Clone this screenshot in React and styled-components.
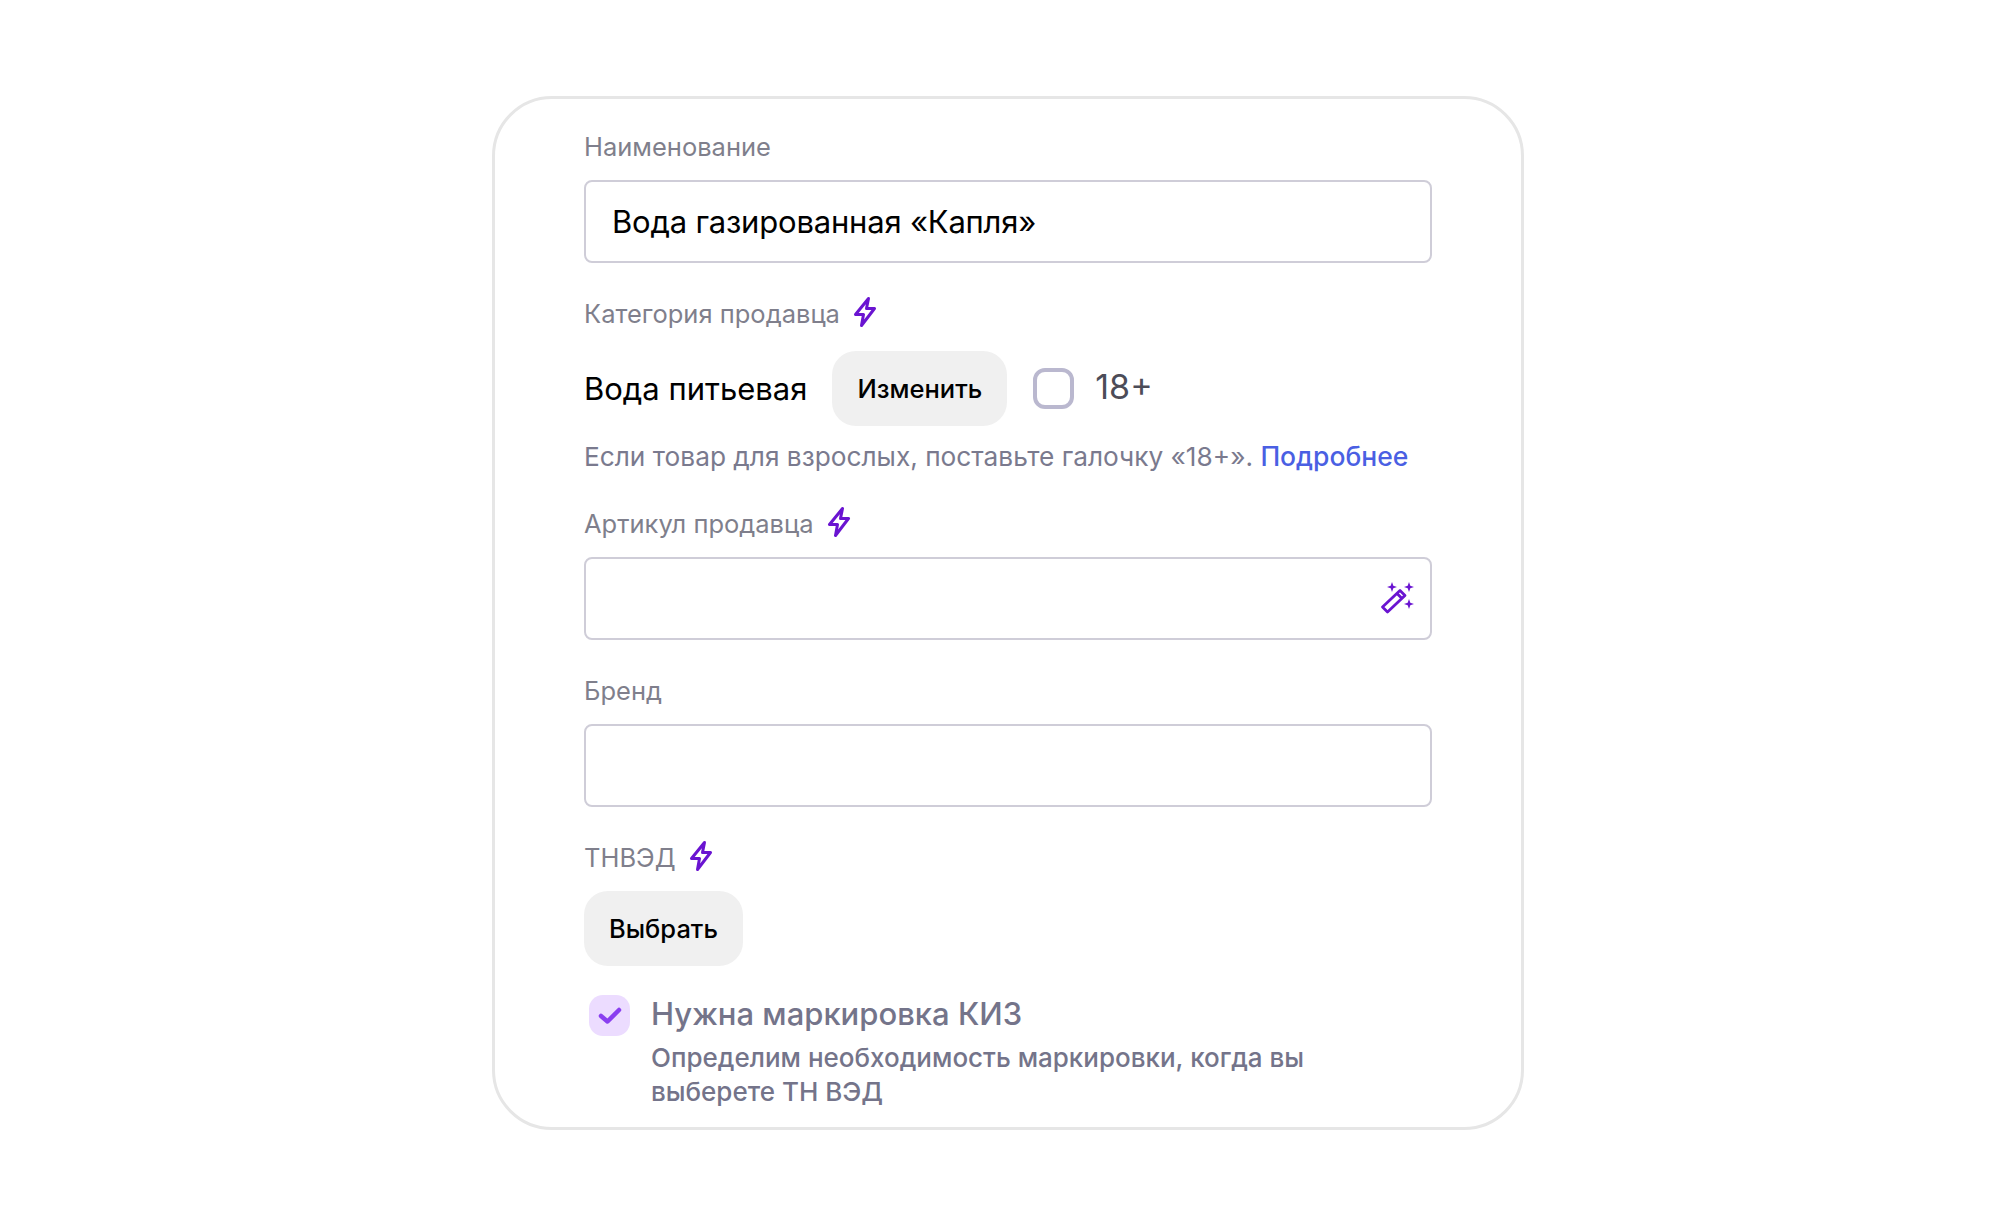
import React from 'react'
import styled, { createGlobalStyle } from 'styled-components'

const Global = createGlobalStyle`
  html, body { margin: 0; padding: 0; background: #fff; }
  body { font-family: Inter, "Noto Sans", sans-serif; }
`

const Page = styled.div`
  width: 2016px;
  height: 1227px;
  display: flex;
  justify-content: center;
  padding-top: 96px;
  box-sizing: border-box;
`

const Card = styled.div`
  width: 1032px;
  height: 1034px;
  box-sizing: border-box;
  border: 3px solid #e6e6e6;
  border-radius: 60px;
  padding: 31px 89px 0;
  display: flex;
  flex-direction: column;
`

const Label = styled.div`
  display: flex;
  align-items: center;
  gap: 13px;
  height: 32px;
  font-size: 25.5px;
  line-height: 32px;
  color: #7f7f8c;
  margin-top: ${p => p.$top || 35}px;
  margin-bottom: ${p => p.$bottom || 17}px;
`

const Input = styled.div`
  height: 83px;
  box-sizing: border-box;
  border: 2px solid #cfcdd8;
  border-radius: 8px;
  padding: 0 14px 0 26px;
  display: flex;
  align-items: center;
  justify-content: space-between;
  font-size: 31px;
  letter-spacing: -0.2px;
  color: #000;
`

const CategoryRow = styled.div`
  display: flex;
  align-items: center;
`

const Category = styled.span`
  font-size: 31px;
  color: #000;
  margin-right: 25px;
`

const Button = styled.button`
  height: 75px;
  padding: 0 25px;
  border: 0;
  border-radius: 24px;
  background: #f0f0f0;
  color: #000;
  font: 500 25.5px Inter, sans-serif;
  align-self: flex-start;
`

const AgeBox = styled.span`
  width: 41px;
  height: 41px;
  box-sizing: border-box;
  border: 4px solid #bab8cf;
  border-radius: 12px;
  margin: 0 21px 0 26px;
`

const AgeText = styled.span`
  font-size: 34px;
  line-height: 38px;
  margin-bottom: 3px;
  color: #4c4c58;
`

const Hint = styled.div`
  font-size: 26.25px;
  line-height: 33px;
  color: #7a7a8e;
  margin-top: 14px;
`

const Link = styled.a`
  color: #4a5fe3;
  font-weight: 500;
  font-size: 26.5px;
`

const KizRow = styled.div`
  display: flex;
  gap: 21px;
  margin-top: 29px;
  padding-left: 5px;
`

const KizBox = styled.span`
  flex: none;
  width: 41px;
  height: 41px;
  border-radius: 14px;
  background: #ecdcff;
  display: flex;
  align-items: center;
  justify-content: center;
`

const KizBody = styled.div`
  display: flex;
  flex-direction: column;
`

const KizTitle = styled.div`
  font-size: 31px;
  font-weight: 500;
  line-height: 38px;
  color: #74748a;
`

const KizText = styled.div`
  font-size: 26px;
  font-weight: 500;
  line-height: 33.5px;
  color: #74748a;
  margin-top: 8px;
  width: 700px;
`

const BoltIcon = styled.svg`
  margin-bottom: 4px;
`

const WandIcon = styled.svg`
  margin-bottom: 3px;
`

const Bolt = () => (
  <BoltIcon width="24" height="32" viewBox="0 0 24 32" fill="none">
    <path d="M15.500 2.500 2.500 18.500h8l-2 11 13-17H13.500l2-10Z" stroke="#6a14d1" strokeWidth="3" strokeLinejoin="round" />
  </BoltIcon>
)

const Wand = () => (
  <WandIcon width="36" height="36" viewBox="0 0 36 36" fill="none">
    <path d="M2.500 28 20 11.500l5 5L7.500 33l-5-5Z" stroke="#6a14d1" strokeWidth="2.800" strokeLinejoin="round" />
    <path d="m17 14.500 5 5" stroke="#6a14d1" strokeWidth="2.800" />
    <path d="M12 3 13.300 6.700l3.700 1.300-3.700 1.300L12 13l-1.300-3.700L7 8l3.700-1.300L12 3ZM29 3l1.300 3.700L34 8l-3.700 1.300L29 13l-1.300-3.700L24 8l3.700-1.300L29 3ZM29 20l1.300 3.700 3.700 1.300-3.700 1.300L29 30l-1.300-3.700L24 25l3.700-1.300L29 20Z" fill="#6a14d1" />
  </WandIcon>
)

const Check = () => (
  <svg width="24" height="20" viewBox="0 0 24 20" fill="none">
    <path d="M3 10 9.500 15.500 21 4" stroke="#8a3ff0" strokeWidth="4.500" strokeLinecap="round" strokeLinejoin="round" />
  </svg>
)

export default function App() {
  return (
    <Page>
      <Global />
      <Card>
        <Label $top={1}>Наименование</Label>
        <Input>Вода газированная «Капля»</Input>
        <Label $bottom={21}>Категория продавца <Bolt /></Label>
        <CategoryRow>
          <Category>Вода питьевая</Category>
          <Button>Изменить</Button>
          <AgeBox />
          <AgeText>18+</AgeText>
        </CategoryRow>
        <Hint>Если товар для взрослых, поставьте галочку «18+». <Link>Подробнее</Link></Hint>
        <Label $top={35} $bottom={17}>Артикул продавца <Bolt /></Label>
        <Input><span /><Wand /></Input>
        <Label>Бренд</Label>
        <Input />
        <Label>ТНВЭД <Bolt /></Label>
        <Button>Выбрать</Button>
        <KizRow>
          <KizBox><Check /></KizBox>
          <KizBody>
            <KizTitle>Нужна маркировка КИЗ</KizTitle>
            <KizText>Определим необходимость маркировки, когда вы выберете ТН ВЭД</KizText>
          </KizBody>
        </KizRow>
      </Card>
    </Page>
  )
}
